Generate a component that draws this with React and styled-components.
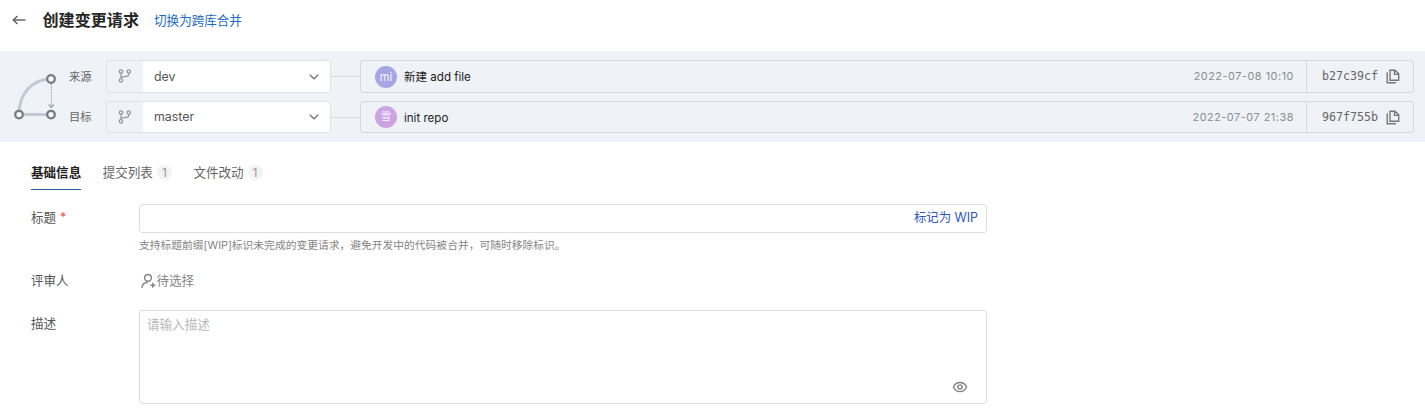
import React from "react";
import styled, { createGlobalStyle } from "styled-components";

const Global = createGlobalStyle`
  * { box-sizing: border-box; }
  body {
    margin: 0;
    background: #fff;
    color: #555;
    font-family: Inter, "Noto Sans CJK SC", sans-serif;
    font-size: 12.55px;
    line-height: 18px;
  }
  svg { display: block; flex: none; }
`;

const Page = styled.div`
  width: 100%;
  height: 416px;
  overflow: hidden;
`;

const Header = styled.header`
  display: flex;
  align-items: center;
  height: 51px;
  padding: 0 0 11px 12px;
`;

const Title = styled.h1`
  margin: 0 15px 0 16.5px;
  font-size: 16.1px;
  line-height: 24px;
  font-weight: 700;
  color: #262626;
`;

const SwitchLink = styled.a`
  padding-top: 2px;
  color: #1b6bc6;
`;

const Compare = styled.section`
  display: flex;
  height: 91px;
  padding: 9px 11px 0 12px;
  background: #eff2f6;
`;

const Refs = styled.div`
  flex: 1;
  display: flex;
  flex-direction: column;
  gap: 8px;
  margin-left: 11px;
`;

const RefRow = styled.div`
  display: flex;
  align-items: center;
  height: ${(p) => p.$height}px;
`;

const RefLabel = styled.span`
  width: 37px;
  font-size: 11.3px;
  color: #666;
`;

const BranchSelect = styled.div`
  display: flex;
  width: 225px;
  height: 100%;
  border: 1px solid #dfe1e5;
  border-radius: 3px;
  overflow: hidden;
`;

const BranchIconCell = styled.div`
  display: flex;
  align-items: center;
  justify-content: center;
  width: 36px;
  padding-bottom: 1px;
  color: #969ba3;
`;

const BranchValue = styled.div`
  flex: 1;
  display: flex;
  align-items: center;
  justify-content: space-between;
  padding: 0 10px 0 11px;
  background: #fff;
  font-size: 12.4px;
  color: #555;
`;

const Connector = styled.div`
  width: 29px;
  height: 1px;
  background: #dadde2;
`;

const Commit = styled.div`
  flex: 1;
  display: flex;
  align-items: center;
  height: 100%;
  padding-left: 14px;
  border: 1px solid #d5d8dd;
  border-radius: 3px;
`;

const Avatar = styled.span`
  display: flex;
  align-items: center;
  justify-content: center;
  width: 22px;
  height: 22px;
  margin-right: 7px;
  border-radius: 50%;
  background: ${(p) => p.$color};
  color: #f8f4ff;
  font-size: ${(p) => p.$size}px;
`;

const Message = styled.span`
  flex: 1;
  padding-top: 1px;
  font-size: 11.55px;
  color: #222;
`;

const Time = styled.time`
  margin-right: 12px;
  padding-top: 1px;
  font-size: 10.8px;
  letter-spacing: 0.57px;
  color: #8b8d91;
`;

const Hash = styled.div`
  display: flex;
  align-items: center;
  justify-content: space-between;
  width: 107px;
  height: 100%;
  padding: 0 13px 0 15px;
  border-left: 1px solid #d5d8dd;
  font-family: "DejaVu Sans Mono", monospace;
  font-size: 11.65px;
  color: #666;
`;

const HashText = styled.span`
  padding-bottom: 1px;
`;

const Tabs = styled.nav`
  display: flex;
  gap: 21.5px;
  height: 48px;
  padding: 22px 0 0 31px;
`;

const Tab = styled.div`
  display: flex;
  align-items: flex-start;
  gap: 4px;
  height: 26px;
  border-bottom: 1px solid ${(p) => (p.$active ? "#2b589c" : "transparent")};
  color: ${(p) => (p.$active ? "#222" : "#666")};
  font-weight: ${(p) => (p.$active ? 700 : 400)};
`;

const Count = styled.span`
  width: 15px;
  height: 15px;
  margin-top: 1px;
  border-radius: 7.5px;
  background: #f3f3f3;
  color: #999;
  font-size: 12px;
  line-height: 15px;
  text-align: center;
`;

const Form = styled.form`
  padding: 14px 0 0 31px;
`;

const Field = styled.div`
  display: flex;
  align-items: flex-start;
  height: ${(p) => p.$height}px;
`;

const Label = styled.label`
  width: 108px;
  padding-top: 5px;
`;

const Required = styled.span`
  margin-left: 4px;
  color: #f0534a;
`;

const Control = styled.div`
  width: 848px;
`;

const TitleInput = styled.div`
  display: flex;
  align-items: center;
  justify-content: flex-end;
  height: 29px;
  padding: 0 8px 1px 0;
  border: 1px solid #dedede;
  border-radius: 3px;
  color: #2c58bf;
  font-size: 12.4px;
`;

const Hint = styled.p`
  margin: 5px 0 0;
  font-size: 10.78px;
  line-height: 16px;
  color: #858585;
`;

const Reviewer = styled.div`
  display: flex;
  align-items: center;
  padding: 5px 0 0 2px;
  color: #858585;
`;

const Description = styled.div`
  display: flex;
  justify-content: space-between;
  height: 94px;
  padding: 5px 18px 8px 7px;
  border: 1px solid #dedede;
  border-radius: 3px;
  color: #b8b8b8;
`;

const PreviewButton = styled.span`
  align-self: flex-end;
  color: #808080;
`;

const BackIcon = () => (
  <svg width="14" height="12" viewBox="0 0 14 12" fill="none" stroke="#666" strokeWidth="1.5">
    <path d="M13.5 6H1.5M5.5 2L1.3 6l4.2 4" />
  </svg>
);

const MergeDiagram = () => (
  <svg width="46" height="64" viewBox="0 0 46 64" fill="none">
    <path d="M7 54C7 34 20 19 39 19M7 54.5h32" stroke="#c3c8d5" strokeWidth="3" />
    <path d="M39.3 24v23" stroke="#8e939c" strokeDasharray="1.5 1.3" />
    <path d="M36.7 44.7l2.6 2.7 2.6-2.7" stroke="#8e939c" strokeWidth="1.2" />
    <g fill="#f5f7fa" stroke="#777b82" strokeWidth="2.3">
      <circle cx="39" cy="19" r="3.8" />
      <circle cx="7" cy="54.6" r="3.8" />
      <circle cx="39" cy="54.6" r="3.8" />
    </g>
  </svg>
);

const BranchIcon = () => (
  <svg width="14" height="14" viewBox="0 0 14 14" fill="none" stroke="currentColor" strokeWidth="1.3">
    <circle cx="3" cy="2.5" r="1.7" />
    <circle cx="10.8" cy="2.5" r="1.7" />
    <circle cx="3" cy="11.3" r="1.7" />
    <path d="M3 4.2v5.4M10.8 4.2v1Q10.8 7.1 9 7.3L6 7.7Q3.2 8 3 9.6" />
  </svg>
);

const ChevronIcon = () => (
  <svg width="12" height="12" viewBox="0 0 12 12" fill="none" stroke="#777" strokeWidth="1.5">
    <path d="M1.8 3.8L6 7.8l4.2-4" />
  </svg>
);

const CopyIcon = () => (
  <svg width="14" height="15" viewBox="0 0 14 15" fill="none" stroke="#777" strokeWidth="1.4">
    <path d="M4 1.2h5l3.7 3.7v6.4H4zM8.5 1.2v4.2h4.2M1.2 3.2v10.5h8.7" />
  </svg>
);

const AddUserIcon = () => (
  <svg width="15.5" height="16" viewBox="0 0 15.5 16" fill="none" stroke="currentColor" strokeWidth="1.5">
    <circle cx="7" cy="4.8" r="3.4" />
    <path d="M.9 14.8c.2-3.2 2.4-5.2 5.8-5.3M11.8 9.7v5M9.3 12.2h5" />
  </svg>
);

const EyeIcon = () => (
  <svg width="16" height="16" viewBox="0 0 16 16" fill="none" stroke="currentColor" strokeWidth="1.4">
    <path d="M1.4 8C4.2 1.9 11.8 1.9 14.6 8 11.8 14.1 4.2 14.1 1.4 8z" />
    <circle cx="8" cy="8" r="2.1" />
  </svg>
);

const refs = [
  { label: "来源", branch: "dev", avatar: "mi", color: "#a5a6e3", size: 11, message: "新建 add file", time: "2022-07-08 10:10", hash: "b27c39cf", height: 33 },
  { label: "目标", branch: "master", avatar: "雪", color: "#cba4e1", size: 10.5, message: "init repo", time: "2022-07-07 21:38", hash: "967f755b", height: 32 },
];

export default function App() {
  return (
    <Page>
      <Global />
      <Header>
        <BackIcon />
        <Title>创建变更请求</Title>
        <SwitchLink>切换为跨库合并</SwitchLink>
      </Header>
      <Compare>
        <MergeDiagram />
        <Refs>
          {refs.map((r) => (
            <RefRow key={r.branch} $height={r.height}>
              <RefLabel>{r.label}</RefLabel>
              <BranchSelect>
                <BranchIconCell><BranchIcon /></BranchIconCell>
                <BranchValue>{r.branch}<ChevronIcon /></BranchValue>
              </BranchSelect>
              <Connector />
              <Commit>
                <Avatar $color={r.color} $size={r.size}>{r.avatar}</Avatar>
                <Message>{r.message}</Message>
                <Time>{r.time}</Time>
                <Hash><HashText>{r.hash}</HashText><CopyIcon /></Hash>
              </Commit>
            </RefRow>
          ))}
        </Refs>
      </Compare>
      <Tabs>
        <Tab $active>基础信息</Tab>
        <Tab>提交列表<Count>1</Count></Tab>
        <Tab>文件改动<Count>1</Count></Tab>
      </Tabs>
      <Form>
        <Field $height={63}>
          <Label>标题<Required>*</Required></Label>
          <Control>
            <TitleInput>标记为 WIP</TitleInput>
            <Hint>支持标题前缀[WIP]标识未完成的变更请求，避免开发中的代码被合并，可随时移除标识。</Hint>
          </Control>
        </Field>
        <Field $height={43}>
          <Label>评审人</Label>
          <Control>
            <Reviewer><AddUserIcon />待选择</Reviewer>
          </Control>
        </Field>
        <Field $height={94}>
          <Label>描述</Label>
          <Control>
            <Description>请输入描述<PreviewButton><EyeIcon /></PreviewButton></Description>
          </Control>
        </Field>
      </Form>
    </Page>
  );
}
